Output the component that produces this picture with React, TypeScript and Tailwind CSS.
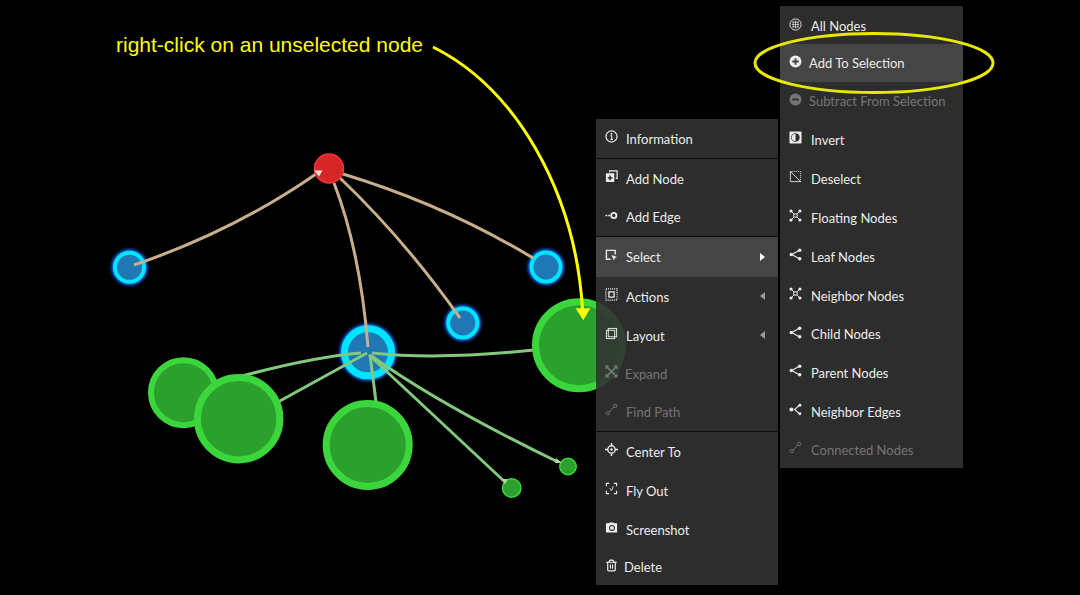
import React from 'react';
import { Trash2 } from 'lucide-react';

type IconProps = { className?: string };

const Svg = ({ children, className = '' }: { children: React.ReactNode; className?: string }) => (
    <svg viewBox="0 0 14 14" width="13" height="13" fill="none" stroke="currentColor" strokeWidth="1.2" className={className}>
        {children}
    </svg>
);

const InfoIcon = () => (
    <Svg>
        <circle cx="7" cy="7" r="6" strokeWidth="1.3" />
        <circle cx="7" cy="4" r="1" fill="currentColor" stroke="none" />
        <path d="M5.8 6.2H7.3V10M5.6 10.2h3.2" strokeWidth="1.2" />
    </Svg>
);
const AddNodeIcon = () => (
    <Svg>
        <path d="M5 2.5V1h8v8h-1.5" strokeWidth="1.3" />
        <rect x="1" y="3.5" width="9" height="9.5" rx="1" fill="currentColor" stroke="none" />
        <path d="M5.5 6v5M3 8.5h5" stroke="#2d2d2d" strokeWidth="1.6" />
    </Svg>
);
const AddEdgeIcon = () => (
    <Svg>
        <circle cx="9.5" cy="7" r="2.8" strokeWidth="2" />
        <path d="M0.5 7h6" strokeWidth="1.8" strokeDasharray="2 1" />
    </Svg>
);
const SelectIcon = () => (
    <Svg>
        <path d="M6 11H1.5V1.5H11V6" strokeWidth="1.5" />
        <path d="M7 6.5l6 2.2-2.4 1-1 2.6z" fill="currentColor" stroke="none" />
    </Svg>
);
const ActionsIcon = () => (
    <Svg>
        <rect x="1" y="1" width="12" height="12" strokeDasharray="1.2 1" />
        <rect x="4.2" y="4.2" width="5.6" height="5.6" strokeWidth="1.4" />
    </Svg>
);
const LayoutIcon = () => (
    <Svg>
        <rect x="1.5" y="3.5" width="9" height="9" strokeWidth="1" />
        <rect x="3.5" y="1.5" width="9" height="9" strokeWidth="1" />
    </Svg>
);
const ExpandIcon = () => (
    <Svg>
        <path d="M2 2l10 10M12 2L2 12" strokeWidth="1.6" />
        <path d="M0.5 0.5h4.5l-4.5 4.5zM13.5 0.5H9l4.5 4.5zM0.5 13.5H5L0.5 9zM13.5 13.5H9L13.5 9z" fill="currentColor" stroke="none" />
    </Svg>
);
const PathIcon = () => (
    <Svg>
        <circle cx="3" cy="11" r="1.8" strokeWidth="1" />
        <circle cx="11" cy="3" r="1.8" strokeWidth="1" />
        <path d="M4.3 9.7l5.4-5.4" strokeWidth="1" />
    </Svg>
);
const CenterIcon = () => (
    <Svg>
        <circle cx="7" cy="7" r="4" strokeWidth="1.5" />
        <circle cx="7" cy="7" r="1.3" fill="currentColor" stroke="none" />
        <path d="M7 0v3M7 11v3M0 7h3M11 7h3" strokeWidth="1.6" />
    </Svg>
);
const FlyOutIcon = () => (
    <Svg>
        <path d="M4.5 1.5h-3v3M9.5 1.5h3v3M1.5 9.5v3h3M12.5 9.5v3h-3" strokeWidth="1.2" />
        <path d="M5 6.5l2 3 2-5" strokeWidth="0.9" />
    </Svg>
);
const CameraIcon = () => (
    <Svg>
        <path d="M1 2.5h3l1-1h4l1 1h3v10H1z" fill="currentColor" stroke="none" />
        <circle cx="7.5" cy="7.5" r="2.6" stroke="#2d2d2d" strokeWidth="1.1" />
    </Svg>
);
const GridCircleIcon = () => (
    <Svg>
        <circle cx="7" cy="7" r="6" strokeWidth="1" />
        <path d="M4.5 3.5v7M7 3v8M9.5 3.5v7M3.5 4.5h7M3 7h8M3.5 9.5h7" strokeWidth="0.7" />
    </Svg>
);
const PlusCircleIcon = () => (
    <Svg>
        <circle cx="7" cy="7" r="6.4" fill="currentColor" stroke="none" />
        <path d="M7 3.5v7M3.5 7h7" stroke="#454545" strokeWidth="2" />
    </Svg>
);
const MinusCircleIcon = () => (
    <Svg>
        <circle cx="7" cy="7" r="6.4" fill="currentColor" stroke="none" />
        <path d="M3.5 7h7" stroke="#2d2d2d" strokeWidth="2" />
    </Svg>
);
const InvertIcon = () => (
    <Svg>
        <rect x="0.5" y="0.5" width="13" height="13" rx="1" fill="currentColor" stroke="none" />
        <path d="M7 2.5a4.5 4.5 0 0 1 0 9z" fill="#2d2d2d" stroke="none" />
        <path d="M7 2.5a4.5 4.5 0 0 0 0 9" fill="none" stroke="#2d2d2d" strokeWidth="0.8" />
    </Svg>
);
const DeselectIcon = () => (
    <Svg>
        <path d="M1.5 1.5h11v11" strokeWidth="0.9" strokeDasharray="1.2 0.9" />
        <path d="M1.5 1.5v11h11M1 1l12 12" strokeWidth="0.9" />
    </Svg>
);
const ClusterIcon = () => (
    <Svg>
        <path d="M3 3l2.5 2.5M11 3L8.5 5.5M3 11l2.5-2.5M11 11L8.5 8.5" strokeWidth="1" />
        <circle cx="7" cy="7" r="2" strokeWidth="1.1" />
        <circle cx="2.2" cy="2.2" r="1.7" fill="currentColor" stroke="none" />
        <circle cx="11.8" cy="2.2" r="1.7" fill="currentColor" stroke="none" />
        <circle cx="2.2" cy="11.8" r="1.7" fill="currentColor" stroke="none" />
        <circle cx="11.8" cy="11.8" r="1.7" fill="currentColor" stroke="none" />
    </Svg>
);
const ShareIcon = () => (
    <Svg>
        <path d="M11 2.5L3 7l8 4.5" strokeWidth="1.2" />
        <circle cx="2.4" cy="7" r="1.8" fill="currentColor" stroke="none" />
        <circle cx="11.5" cy="2.4" r="1.9" fill="currentColor" stroke="none" />
        <circle cx="11.5" cy="11.6" r="1.9" fill="currentColor" stroke="none" />
    </Svg>
);
const EdgesIcon = () => (
    <Svg>
        <path d="M11 2.5L6 7l5 4.5" strokeWidth="1.2" />
        <circle cx="2.6" cy="7" r="2.2" fill="currentColor" stroke="none" />
        <circle cx="11.7" cy="2.4" r="1.6" fill="currentColor" stroke="none" />
        <circle cx="11.7" cy="11.6" r="1.6" fill="currentColor" stroke="none" />
    </Svg>
);

const TrashIcon = ({ className }: IconProps) => <Trash2 size={13} strokeWidth={2.2} className={className} />;

type MenuRow = {
    label: string;
    icon: React.ReactNode;
    height: string;
    disabled?: boolean;
    active?: boolean;
    caret?: 'left' | 'right';
    gap?: string;
    separator?: boolean;
};

const mainRows: MenuRow[] = [
    { label: 'Information', icon: <InfoIcon />, height: 'h-[39px]', separator: true },
    { label: 'Add Node', icon: <AddNodeIcon />, height: 'h-[39px]' },
    { label: 'Add Edge', icon: <AddEdgeIcon />, height: 'h-[38px]', separator: true },
    { label: 'Select', icon: <SelectIcon />, height: 'h-[40px]', active: true, caret: 'right' },
    { label: 'Actions', icon: <ActionsIcon />, height: 'h-[39px]', caret: 'left' },
    { label: 'Layout', icon: <LayoutIcon />, height: 'h-[39px]', caret: 'left' },
    { label: 'Expand', icon: <ExpandIcon />, height: 'h-[37px]', disabled: true, gap: 'w-[20px]' },
    { label: 'Find Path', icon: <PathIcon />, height: 'h-[39px]', disabled: true, separator: true },
    { label: 'Center To', icon: <CenterIcon />, height: 'h-[39px]' },
    { label: 'Fly Out', icon: <FlyOutIcon />, height: 'h-[39px]' },
    { label: 'Screenshot', icon: <CameraIcon />, height: 'h-[39px]' },
    { label: 'Delete', icon: <TrashIcon />, height: 'h-[36px]', gap: 'w-[19px]' },
];

const selectRows: MenuRow[] = [
    { label: 'All Nodes', icon: <GridCircleIcon />, height: 'h-[38px] pt-[4px]', gap: 'w-[22px]' },
    { label: 'Add To Selection', icon: <PlusCircleIcon />, height: 'h-[38px]', active: true, gap: 'w-[20px]' },
    { label: 'Subtract From Selection', icon: <MinusCircleIcon />, height: 'h-[38px]', disabled: true, gap: 'w-[20px]' },
    { label: 'Invert', icon: <InvertIcon />, height: 'h-[39px]', gap: 'w-[22px]' },
    { label: 'Deselect', icon: <DeselectIcon />, height: 'h-[39px]', gap: 'w-[22px]' },
    { label: 'Floating Nodes', icon: <ClusterIcon />, height: 'h-[39px]', gap: 'w-[22px]' },
    { label: 'Leaf Nodes', icon: <ShareIcon />, height: 'h-[39px]', gap: 'w-[22px]' },
    { label: 'Neighbor Nodes', icon: <ClusterIcon />, height: 'h-[39px]', gap: 'w-[22px]' },
    { label: 'Child Nodes', icon: <ShareIcon />, height: 'h-[38px]', gap: 'w-[22px]' },
    { label: 'Parent Nodes', icon: <ShareIcon />, height: 'h-[39px]', gap: 'w-[22px]' },
    { label: 'Neighbor Edges', icon: <EdgesIcon />, height: 'h-[39px]', gap: 'w-[22px]' },
    { label: 'Connected Nodes', icon: <PathIcon />, height: 'h-[37px]', disabled: true, gap: 'w-[22px]' },
];

const Row = ({ row }: { row: MenuRow }) => (
    <>
        <div className={`${row.height} flex items-center pl-[9px] pr-[13px] pt-[2px] text-[13px] ${row.active ? 'bg-[#454545]' : ''} ${row.disabled ? 'text-[#757575]' : 'text-[#ececec]'}`}>
            <span className={`${row.gap ?? 'w-[21px]'} shrink-0 mb-[6px]`}>{row.icon}</span>
            <span className="flex-1 whitespace-nowrap">{row.label}</span>
            {row.caret === 'right' && <span className="w-0 h-0 mb-[2px] border-y-[4px] border-y-transparent border-l-[5px] border-l-white" />}
            {row.caret === 'left' && <span className="w-0 h-0 mb-[4px] border-y-[4px] border-y-transparent border-r-[5px] border-r-[#999999]" />}
        </div>
        {row.separator && <div className="h-[1px] bg-[#0c0c0c]" />}
    </>
);

const tan = '#c9ae8c';
const green = '#84c77e';

const tanEdges = [
    'M134 265 Q234 231 316 174',
    'M334 183 Q360 250 368 347',
    'M340 178 Q405 240 460 318',
    'M343 174 Q445 205 533 258',
];
const greenEdges = [
    'M361 353 Q300 358 200 388',
    'M367 353 L278 402',
    'M370 355 L376 402',
    'M372 353 Q440 360 534 350',
    'M370 355 Q440 405 558 462',
    'M369 355 Q430 412 505 482',
];

const GraphNode = ({ x, y, r, w = 6 }: { x: number; y: number; r: number; w?: number }) => (
    <circle cx={x} cy={y} r={r - w / 2} fill="#2ca02c" stroke="#3bd63b" strokeWidth={w} />
);

const SelectedNode = ({ x, y, r, w }: { x: number; y: number; r: number; w: number }) => (
    <>
        <circle cx={x} cy={y} r={r + 1.5} fill="#0a6cff" filter="url(#glow)" />
        <circle cx={x} cy={y} r={r - w / 2} fill="#1f77b4" stroke="#00e5ff" strokeWidth={w} />
    </>
);

export default function App() {
    return (
        <div className="relative w-[1080px] h-[595px] overflow-hidden bg-black font-['Lato',sans-serif]">
            <svg width="1080" height="595" className="absolute inset-0">
                <defs>
                    <filter id="glow" x="-30%" y="-30%" width="160%" height="160%">
                        <feGaussianBlur stdDeviation="1.8" />
                    </filter>
                </defs>

                <SelectedNode x={129.5} y={267.3} r={16.5} w={4} />
                <SelectedNode x={546} y={267} r={16.5} w={4} />
                <SelectedNode x={462.8} y={323} r={16.5} w={4} />
                <SelectedNode x={368} y={352.3} r={27} w={7} />

                {tanEdges.map(d => <path key={d} d={d} fill="none" stroke={tan} strokeWidth="3" />)}
                {greenEdges.map(d => <path key={d} d={d} fill="none" stroke={green} strokeWidth="3" />)}

                <circle cx="329" cy="168.5" r="14.5" fill="#d62728" stroke="#f5333a" strokeWidth="1.5" />
                <path d="M314 170.5h8.5l-3.5 6z" fill="#f2dfc4" />

                <GraphNode x={183.5} y={392.7} r={35.5} />
                <GraphNode x={238.7} y={418.7} r={44.7} w={7} />
                <GraphNode x={367.7} y={445} r={45} w={7} />
                <GraphNode x={579} y={345.3} r={47} w={7} />
                <GraphNode x={568} y={466.5} r={9} w={1.5} />
                <GraphNode x={511.7} y={488} r={10} w={1.5} />
                <path d="M556 458l6 5-7 0z" fill="#a9dba3" />
                <path d="M502 479l6 0-3 5z" fill="#a9dba3" />

                <path d="M433 47 C515 88 575 190 582.5 309" fill="none" stroke="#ffff00" strokeWidth="3" />
                <path d="M575.7 308.3h14.6l-7 12z" fill="#ffff00" />
            </svg>

            <div className="absolute left-[116px] top-[32px] text-[21px] leading-[26px] text-[#ffff00] font-['Liberation_Sans',sans-serif] whitespace-nowrap">
                right-click on an unselected node
            </div>

            <div className="absolute left-[596px] top-[119px] w-[182px] flex flex-col bg-[#323232]/90">
                {mainRows.map(row => <Row key={row.label} row={row} />)}
            </div>

            <div className="absolute left-[780px] top-[6px] w-[183px] flex flex-col bg-[#323232]/90">
                {selectRows.map(row => <Row key={row.label} row={row} />)}
            </div>

            <svg width="1080" height="595" className="absolute inset-0 pointer-events-none">
                <ellipse cx="874" cy="63" rx="119" ry="29.5" fill="none" stroke="#e8e800" strokeWidth="3" />
            </svg>
        </div>
    );
}
